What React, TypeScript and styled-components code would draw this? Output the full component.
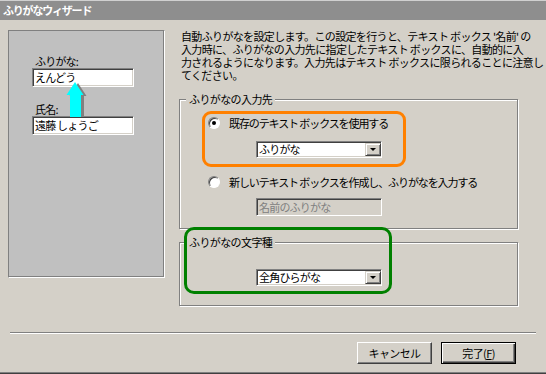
import React from 'react';
import styled, { createGlobalStyle } from 'styled-components';

const GlobalStyle = createGlobalStyle`
	body {
		margin: 0;
		background: #d4d0c8;
		font-family: 'Noto Sans CJK JP', 'Noto Sans', sans-serif;
		font-size: 11px;
		color: #000;
	}
`;

const Window = styled.div`
	width: 546px;
	height: 374px;
	box-sizing: border-box;
	background: #d4d0c8;
	border-bottom: 1px solid #404040;
	box-shadow: inset 0 -1px 0 #808080;
	display: flex;
	flex-direction: column;
	overflow: hidden;
`;

const TitleBar = styled.div`
	height: 20px;
	box-sizing: border-box;
	border-top: 1px solid #d0d0d0;
	background: #8e8e8e;
	color: #fff;
	font-weight: bold;
	font-size: 11px;
	letter-spacing: -1.2px;
	line-height: 18px;
	padding-left: 3px;
	white-space: nowrap;
`;

const Body = styled.div`
	display: flex;
	padding: 10px 0 0 8px;
`;

const PreviewPanel = styled.div`
	position: relative;
	width: 157px;
	height: 248px;
	box-sizing: border-box;
	background: #c0c0c0;
	border: 1px solid;
	border-color: #808080 #fff #fff #808080;
	box-shadow: inset -1px -1px 0 #808080;
	padding: 24px 0 0 23px;
`;

const PreviewLabel = styled.div<{ $gap?: number }>`
	height: 12px;
	line-height: 12px;
	padding-left: 3px;
	margin-top: ${(p) => p.$gap || 0}px;
	letter-spacing: -0.8px;
	white-space: nowrap;
`;

const SunkenBox = styled.div<{ $disabled?: boolean; $w: number; $h: number }>`
	width: ${(p) => p.$w}px;
	height: ${(p) => p.$h}px;
	box-sizing: border-box;
	border: 1px solid;
	border-color: #808080 #fff #fff #808080;
	box-shadow: inset 1px 1px 0 #404040, inset -1px -1px 0 #d4d0c8;
	background: ${(p) => (p.$disabled ? '#d4d0c8' : '#fff')};
	color: ${(p) => (p.$disabled ? '#808080' : '#000')};
	padding: 0 2px;
	line-height: ${(p) => p.$h - 2}px;
	letter-spacing: -0.8px;
	white-space: nowrap;
	overflow: hidden;
	display: flex;
	align-items: center;
	justify-content: space-between;
	margin-top: ${(p) => (p.$h === 19 ? 1 : 0)}px;
`;

const Arrow = styled.svg`
	position: absolute;
	left: 57px;
	top: 50px;
`;

const RightColumn = styled.div`
	margin-left: 14px;
	width: 339px;
	display: flex;
	flex-direction: column;
`;

const Description = styled.div`
	padding-left: 2px;
	line-height: 13px;
	height: 52px;
	letter-spacing: -0.65px;
	white-space: nowrap;
`;

const GroupBox = styled.div<{ $h: number; $top: number; $pt: number; $pl: number }>`
	position: relative;
	margin-top: ${(p) => p.$top}px;
	height: ${(p) => p.$h}px;
	box-sizing: border-box;
	border: 1px solid #808080;
	box-shadow: inset 1px 1px 0 #fff, 1px 1px 0 #fff;
	padding: ${(p) => p.$pt}px 0 0 ${(p) => p.$pl}px;
`;

const GroupTitle = styled.div`
	position: absolute;
	top: -7px;
	left: 6px;
	padding: 0 3px;
	background: #d4d0c8;
	line-height: 13px;
	letter-spacing: -0.6px;
	white-space: nowrap;
`;

const Highlight = styled.div`
	width: 204px;
	height: 56px;
	box-sizing: border-box;
	border: 3px solid #ff8000;
	border-radius: 9px;
	padding: 1px 0 0 3px;
`;

const GreenHighlight = styled.div`
	position: absolute;
	left: 4px;
	top: -16px;
	width: 208px;
	height: 67px;
	box-sizing: border-box;
	border: 3px solid #008000;
	border-radius: 10px;
	pointer-events: none;
`;

const RadioRow = styled.div<{ $ml?: number; $mt?: number }>`
	display: flex;
	align-items: center;
	gap: 9px;
	height: 16px;
	margin-left: ${(p) => p.$ml || 0}px;
	margin-top: ${(p) => p.$mt || 0}px;
	letter-spacing: -1.1px;
	white-space: nowrap;
`;

const RadioCircle = styled.span<{ $checked?: boolean }>`
	position: relative;
	width: 12px;
	height: 12px;
	box-sizing: border-box;
	border-radius: 50%;
	background: #fff;
	border: 1px solid;
	border-color: #808080 #fff #fff #808080;
	box-shadow: inset 1px 1px 0 #404040;
	flex: none;
	&::after {
		content: '';
		display: ${(p) => (p.$checked ? 'block' : 'none')};
		position: absolute;
		left: 3px;
		top: 3px;
		width: 4px;
		height: 4px;
		border-radius: 50%;
		background: #000;
	}
`;

const Indent = styled.div<{ $ml: number; $mt: number }>`
	margin-left: ${(p) => p.$ml}px;
	margin-top: ${(p) => p.$mt}px;
`;

const DropButton = styled.span`
	width: 16px;
	height: 13px;
	box-sizing: border-box;
	margin-right: -2px;
	background: #d4d0c8;
	border: 1px solid;
	border-color: #d4d0c8 #404040 #404040 #d4d0c8;
	box-shadow: inset 1px 1px 0 #fff, inset -1px -1px 0 #808080;
	display: flex;
	align-items: center;
	justify-content: center;
	flex: none;
	&::after {
		content: '';
		border-left: 3px solid transparent;
		border-right: 3px solid transparent;
		border-top: 3px solid #000;
	}
`;

const Separator = styled.div`
	margin: 26px 10px 0 10px;
	height: 2px;
	box-sizing: border-box;
	border-top: 1px solid #808080;
	border-bottom: 1px solid #fff;
`;

const ButtonRow = styled.div`
	display: flex;
	justify-content: flex-end;
	gap: 9px;
	margin-top: 8px;
	padding-right: 30px;
`;

const Button = styled.button<{ $default?: boolean }>`
	width: 75px;
	height: 22px;
	box-sizing: border-box;
	background: #d4d0c8;
	font-family: inherit;
	font-size: 11px;
	letter-spacing: -0.6px;
	color: #000;
	padding: 0;
	border: 1px solid;
	border-color: ${(p) => (p.$default ? '#000' : '#fff #404040 #404040 #fff')};
	box-shadow: ${(p) =>
		p.$default
			? 'inset 1px 1px 0 #fff, inset -1px -1px 0 #404040, inset -2px -2px 0 #808080'
			: 'inset -1px -1px 0 #808080'};
`;

const Combo = ({ value }: { value: string }) => (
	<SunkenBox $w={126} $h={17}>
		<span>{value}</span>
		<DropButton />
	</SunkenBox>
);

const App = () => {
	return (
		<>
			<GlobalStyle />
			<Window>
				<TitleBar>ふりがなウィザード</TitleBar>
				<Body>
					<PreviewPanel>
						<PreviewLabel>ふりがな:</PreviewLabel>
						<SunkenBox $w={102} $h={19}>えんどう</SunkenBox>
						<PreviewLabel $gap={16}>氏名:</PreviewLabel>
						<SunkenBox $w={102} $h={19}>遠藤 しょうご</SunkenBox>
						<Arrow width="26" height="38" viewBox="0 0 26 38">
							<g fill="#808080" transform="translate(3 1)">
								<polygon points="9,1 0.5,14 17.5,14" />
								<rect x="4" y="14" width="11" height="20" />
							</g>
							<g fill="#00ffff">
								<polygon points="9,1 0.5,14 17.5,14" />
								<rect x="4" y="14" width="11" height="22" />
							</g>
						</Arrow>
					</PreviewPanel>
					<RightColumn>
						<Description>
							自動ふりがなを設定します。この設定を行うと、テキスト ボックス '名前' の<br />
							入力時に、ふりがなの入力先に指定したテキスト ボックスに、自動的に入<br />
							力されるようになります。入力先はテキスト ボックスに限られることに注意し<br />
							てください。
						</Description>
						<GroupBox $top={17} $h={130} $pt={11} $pl={22}>
							<GroupTitle>ふりがなの入力先</GroupTitle>
							<Highlight>
								<RadioRow>
									<RadioCircle $checked />
									既存のテキスト ボックスを使用する
								</RadioRow>
								<Indent $ml={48} $mt={10}>
									<Combo value="ふりがな" />
								</Indent>
							</Highlight>
							<RadioRow $ml={6} $mt={7}>
								<RadioCircle />
								新しいテキスト ボックスを作成し、ふりがなを入力する
							</RadioRow>
							<Indent $ml={54} $mt={8}>
								<SunkenBox $w={126} $h={18} $disabled>
									名前のふりがな
								</SunkenBox>
							</Indent>
						</GroupBox>
						<GroupBox $top={13} $h={64} $pt={26} $pl={76}>
							<GroupTitle>ふりがなの文字種</GroupTitle>
							<Combo value="全角ひらがな" />
							<GreenHighlight />
						</GroupBox>
					</RightColumn>
				</Body>
				<Separator />
				<ButtonRow>
					<Button>キャンセル</Button>
					<Button $default>
						完了(<u>F</u>)
					</Button>
				</ButtonRow>
			</Window>
		</>
	);
};

export default App;
